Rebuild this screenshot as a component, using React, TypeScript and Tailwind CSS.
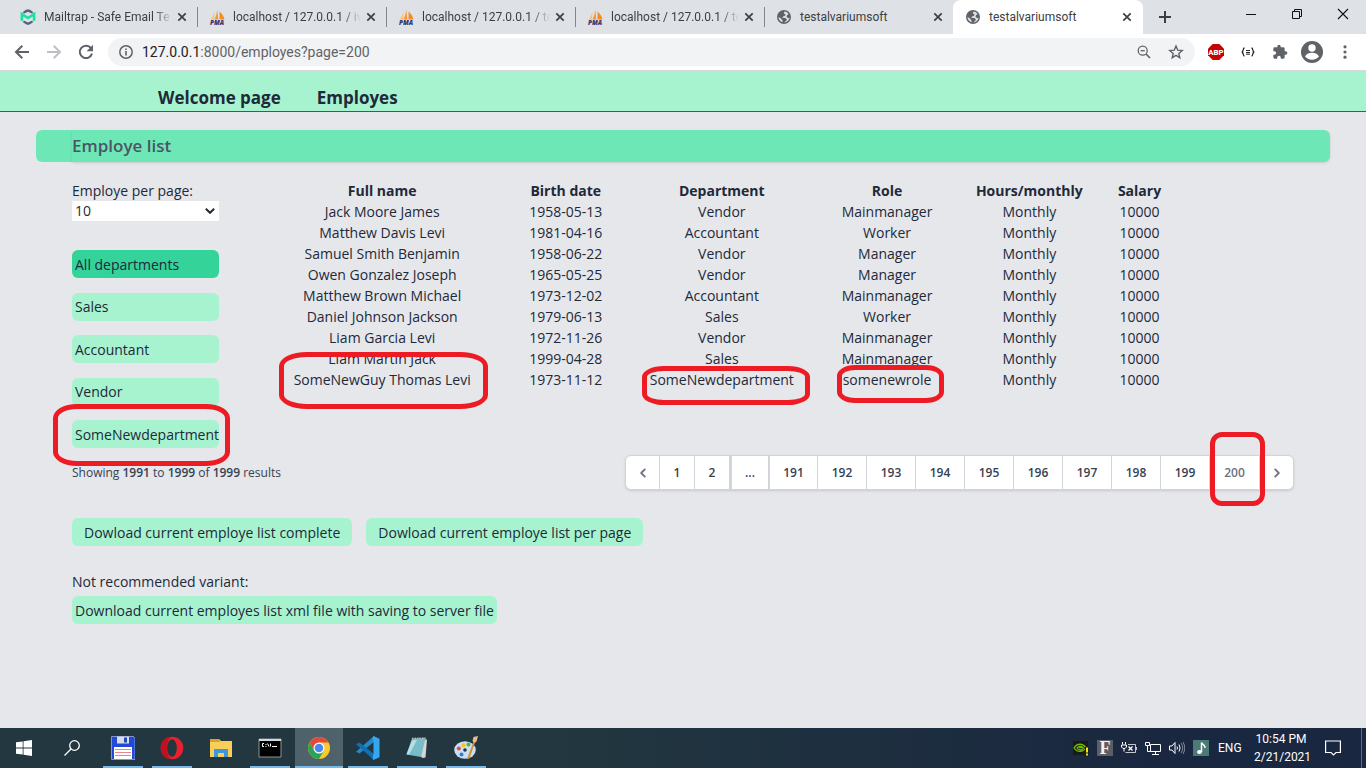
import React from "react";
import type { ReactNode } from "react";

const PAGE_FONT = "font-['Open_Sans','Noto_Sans',sans-serif]";
const SYSTEM_FONT = "font-['Roboto','Noto_Sans',sans-serif]";

/* ---------- Browser icons ---------- */

function MailtrapIcon() {
  return (
    <svg viewBox="0 0 16 16" className="size-4 shrink-0" aria-hidden="true">
      <path d="M2.500 3.400 5.500 1 8 .2l2.500.8 3 2.400-1.700 1L8 2.700 4.200 4.400z" fill="#56617a" />
      <path d="M2.500 12.800 5.500 15 8 15.900l2.500-.9 3-2.200-1.700-1.100L8 13.400l-3.800-1.700z" fill="#56617a" />
      <path d="M1.900 11.700V5.200L8 9l6.100-3.800v6.500" fill="none" stroke="#17e3a1" strokeWidth="2.600" />
    </svg>
  );
}

function PmaIcon() {
  return (
    <svg viewBox="0 0 16 16" className="size-4 shrink-0 overflow-visible" aria-hidden="true">
      <path d="M5.600 1.500 5 10.500H1.500C3.500 8.500 5 5 5.600 1.500z" fill="#fbc078" />
      <path d="M8.200.3 9.300 10.500H5.400C7 7.800 8 4 8.200.3z" fill="#f9962e" />
      <path d="M10.600 2.500c2.500 2 4.300 5 4.900 8h-5z" fill="#f68b1f" />
      <text x="8" y="15.500" textAnchor="middle" fontSize="6.400" fontWeight="800" fontStyle="italic" fill="#35356f" fontFamily="Open Sans, sans-serif">
        PMA
      </text>
    </svg>
  );
}

function GlobeIcon() {
  return (
    <svg viewBox="0 0 16 16" className="size-4 shrink-0" aria-hidden="true">
      <circle cx="8" cy="8" r="7" fill="#5f6368" />
      <path d="M8.500 2.600 7.800 4.500l1.700.8-.4 1.400-2 .7-.9 1.300 3.200.3 1.500 1.200-.8 1.900-2 1.300c2.700.2 5.200-1.900 5.500-4.700l-1.400.5-1.700-1.500.6-1.600 1.500-.8c-.9-1.600-2.400-2.600-4.100-2.700z" fill="#dee1e6" />
      <path d="M2.500 8.100 5 9.400l1.400 1.800.2 2C4.200 12.700 2.500 10.500 2.500 8.100z" fill="#dee1e6" />
    </svg>
  );
}

function CloseIcon() {
  return (
    <svg viewBox="0 0 10 10" className="size-[10px]" aria-hidden="true">
      <path d="m1.300 1.300 7.400 7.400m0-7.400L1.300 8.700" stroke="#3c4043" strokeWidth="1.700" />
    </svg>
  );
}

type Tab = { title: string; icon: ReactNode; active?: boolean; divider?: boolean };

const tabs: Tab[] = [
  { title: "Mailtrap - Safe Email Te", icon: <MailtrapIcon />, divider: true },
  { title: "localhost / 127.0.0.1 / iv", icon: <PmaIcon />, divider: true },
  { title: "localhost / 127.0.0.1 / te", icon: <PmaIcon />, divider: true },
  { title: "localhost / 127.0.0.1 / te", icon: <PmaIcon />, divider: true },
  { title: "testalvariumsoft", icon: <GlobeIcon /> },
  { title: "testalvariumsoft", icon: <GlobeIcon />, active: true },
];

function tabClass(tab: Tab) {
  if (tab.active) return "w-[190px] rounded-t-lg bg-white pl-3";
  return tab.divider ? "w-[189px] pl-[11px]" : "w-[188px] pl-[11px]";
}

function TabStrip() {
  return (
    <div className="flex h-[34px] items-stretch bg-[#dee1e6] pl-[9px]">
      {tabs.map((tab, i) => (
        <div key={i} className={"flex items-center " + tabClass(tab)}>
          {tab.icon}
          <span
            className={
              "ml-2 w-[128px] text-xs whitespace-nowrap text-[#3c4043] " +
              (tab.divider ? "mask-r-from-86%" : "")
            }
          >
            {tab.title}
          </span>
          <button aria-label={"Close " + tab.title} className="ml-[5px]">
            <CloseIcon />
          </button>
          {tab.divider && <span className="ml-auto h-5 w-px bg-[#80868b]" />}
        </div>
      ))}
      <button aria-label="New tab" className="ml-[15px]">
        <svg viewBox="0 0 14 14" className="size-[14px]" aria-hidden="true">
          <path d="M7 1v12M1 7h12" stroke="#3c4043" strokeWidth="2" />
        </svg>
      </button>
      <div className="ml-auto flex items-center gap-[34px] pr-[17px] pb-[6px]">
        <button aria-label="Minimize">
          <svg viewBox="0 0 12 12" className="size-3" aria-hidden="true">
            <path d="M1 6.500h10" stroke="#111" />
          </svg>
        </button>
        <button aria-label="Restore">
          <svg viewBox="0 0 12 12" className="size-3" fill="none" stroke="#111" aria-hidden="true">
            <path d="M1.500 3.500h7v7h-7zM3.500 3.500v-2h7v7h-2" />
          </svg>
        </button>
        <button aria-label="Close window">
          <svg viewBox="0 0 12 12" className="size-3" aria-hidden="true">
            <path d="m1 1 10 10M11 1 1 11" stroke="#111" strokeWidth="1.100" />
          </svg>
        </button>
      </div>
    </div>
  );
}

function Toolbar() {
  return (
    <div className="flex h-9 items-center bg-white pr-[13px] pl-[14px]">
      <button aria-label="Back">
        <svg viewBox="0 0 16 16" className="size-4" fill="none" stroke="#5f6368" strokeWidth="2" aria-hidden="true">
          <path d="M15 8H2.500M8.300 1.700 2 8l6.300 6.300" />
        </svg>
      </button>
      <button aria-label="Forward" className="ml-4">
        <svg viewBox="0 0 16 16" className="size-4" fill="none" stroke="#bdc1c6" strokeWidth="2" aria-hidden="true">
          <path d="M1 8h12.500M7.700 1.700 14 8l-6.300 6.300" />
        </svg>
      </button>
      <button aria-label="Reload" className="ml-4">
        <svg viewBox="0 0 16 16" className="size-4" aria-hidden="true">
          <path d="M13 4.200A6.200 6.200 0 1 0 14 9.500" fill="none" stroke="#5f6368" strokeWidth="2" />
          <path d="M15 .8v6.400H8.600z" fill="#5f6368" />
        </svg>
      </button>
      <div className="ml-[14px] flex h-7 flex-1 items-center rounded-full bg-[#f1f3f4] pr-[11px] pl-[11px]">
        <svg viewBox="0 0 14 14" className="size-[14px] shrink-0" aria-hidden="true">
          <circle cx="7" cy="7" r="6.200" fill="none" stroke="#5f6368" strokeWidth="1.500" />
          <path d="M7 6v4.500M7 3.400v1.600" stroke="#5f6368" strokeWidth="1.600" />
        </svg>
        <div className="ml-[9px] flex-1 text-sm text-[#5f6368]">
          <span className="text-[#202124]">127.0.0.1</span>:8000/employes?page=200
        </div>
        <button aria-label="Zoom">
          <svg viewBox="0 0 14 14" className="size-[14px]" fill="none" stroke="#5f6368" strokeWidth="1.300" aria-hidden="true">
            <circle cx="5.700" cy="5.700" r="4.500" />
            <path d="M3.600 5.700h4.200" />
            <path d="m9 9 4 4" strokeWidth="1.700" />
          </svg>
        </button>
        <button aria-label="Bookmark this page" className="ml-[17px]">
          <svg viewBox="0 0 16 16" className="size-4" fill="none" stroke="#5f6368" strokeWidth="1.400" aria-hidden="true">
            <path d="m8 2 1.700 4.100 4.500.4-3.400 2.900 1 4.300L8 11.400l-3.800 2.300 1-4.300L1.800 6.500l4.500-.4z" />
          </svg>
        </button>
      </div>
      <button aria-label="Adblock Plus" className="ml-3">
        <svg viewBox="0 0 18 18" className="size-[18px]" aria-hidden="true">
          <path d="M5.700 1h6.600L17 5.700v6.600L12.300 17H5.700L1 12.300V5.700z" fill="#c70000" />
          <text x="9" y="11.900" textAnchor="middle" fontSize="7.800" fontWeight="800" fill="#fff" fontFamily="Roboto, sans-serif">ABP</text>
        </svg>
      </button>
      <button aria-label="JSON viewer" className="ml-4">
        <svg viewBox="0 0 14 10" className="h-[10px] w-[14px]" fill="none" stroke="#202124" strokeWidth="1.300" aria-hidden="true">
          <path d="M3.500 1C1.500 1 3 4.500.8 5 3 5.500 1.500 9 3.500 9M10.500 1c2 0 .5 3.500 2.700 4-2.200.5-.7 4-2.700 4" />
          <path d="M5 3.500h4M5 5.500h4M5 7.200h4" strokeWidth="1" />
        </svg>
      </button>
      <button aria-label="Extensions" className="ml-[17px]">
        <svg viewBox="0 0 24 24" className="size-4" fill="#5f6368" aria-hidden="true">
          <path d="M20.500 11H19V7a2 2 0 0 0-2-2h-4V3.500a2.500 2.500 0 0 0-5 0V5H4a2 2 0 0 0-2 2v3.800h1.500a2.700 2.700 0 0 1 0 5.400H2V20a2 2 0 0 0 2 2h3.800v-1.500a2.700 2.700 0 0 1 5.400 0V22H17a2 2 0 0 0 2-2v-4h1.500a2.500 2.500 0 0 0 0-5z" />
        </svg>
      </button>
      <button aria-label="Profile" className="ml-3">
        <svg viewBox="0 0 24 24" className="size-6" aria-hidden="true">
          <circle cx="12" cy="12" r="11" fill="#5f6368" />
          <circle cx="12" cy="8" r="3.700" fill="#fff" />
          <path d="M5 16.200c1.500-2.300 4-3.400 7-3.400s5.500 1.100 7 3.400c-1.500 2.100-4 3.500-7 3.500s-5.500-1.400-7-3.500z" fill="#fff" />
        </svg>
      </button>
      <button aria-label="Menu" className="ml-[13px]">
        <svg viewBox="0 0 16 16" className="size-4" fill="#5f6368" aria-hidden="true">
          <circle cx="8" cy="2.800" r="1.600" />
          <circle cx="8" cy="8" r="1.600" />
          <circle cx="8" cy="13.200" r="1.600" />
        </svg>
      </button>
    </div>
  );
}

/* ---------- Page ---------- */

function Mark({ className }: { className: string }) {
  return (
    <span
      aria-hidden="true"
      className={"pointer-events-none absolute z-10 border-[5px] border-[#ed1c24] " + className}
    />
  );
}

const departments = ["All departments", "Sales", "Accountant", "Vendor", "SomeNewdepartment"];

const columns = ["Full name", "Birth date", "Department", "Role", "Hours/monthly", "Salary"];

const employes = [
  ["Jack Moore James", "1958-05-13", "Vendor", "Mainmanager", "Monthly", "10000"],
  ["Matthew Davis Levi", "1981-04-16", "Accountant", "Worker", "Monthly", "10000"],
  ["Samuel Smith Benjamin", "1958-06-22", "Vendor", "Manager", "Monthly", "10000"],
  ["Owen Gonzalez Joseph", "1965-05-25", "Vendor", "Manager", "Monthly", "10000"],
  ["Matthew Brown Michael", "1973-12-02", "Accountant", "Mainmanager", "Monthly", "10000"],
  ["Daniel Johnson Jackson", "1979-06-13", "Sales", "Worker", "Monthly", "10000"],
  ["Liam Garcia Levi", "1972-11-26", "Vendor", "Mainmanager", "Monthly", "10000"],
  ["Liam Martin Jack", "1999-04-28", "Sales", "Mainmanager", "Monthly", "10000"],
  ["SomeNewGuy Thomas Levi", "1973-11-12", "SomeNewdepartment", "somenewrole", "Monthly", "10000"],
];

const marks: Record<string, string> = {
  "SomeNewGuy Thomas Levi": "-top-[17px] left-[7px] h-[57px] w-[209px] rounded-[28px/14px]",
  SomeNewdepartment: "-top-[3px] left-[3px] h-[39px] w-[168px] rounded-[22px/11px]",
  somenewrole: "-top-1 left-[33px] h-[38px] w-[107px] rounded-[18px/11px]",
};

const pages = ["1", "2", "...", "191", "192", "193", "194", "195", "196", "197", "198", "199", "200"];

function pageClass(p: string) {
  if (p === "...") return "w-10 border-x-2";
  if (p.length === 1) return "w-[35px] border-r";
  if (p === "191") return "w-[48px] border-r";
  return "w-[49px] border-r";
}

function Chevron({ dir }: { dir: "left" | "right" }) {
  return (
    <svg viewBox="0 0 20 20" className="size-[18px]" fill="#6b7280" aria-hidden="true">
      {dir === "left" ? (
        <path fillRule="evenodd" d="M12.707 5.293a1 1 0 010 1.414L9.414 10l3.293 3.293a1 1 0 01-1.414 1.414l-4-4a1 1 0 010-1.414l4-4a1 1 0 011.414 0z" />
      ) : (
        <path fillRule="evenodd" d="M7.293 14.707a1 1 0 010-1.414L10.586 10 7.293 6.707a1 1 0 011.414-1.414l4 4a1 1 0 010 1.414l-4 4a1 1 0 01-1.414 0z" />
      )}
    </svg>
  );
}

function Page() {
  return (
    <main className={"flex-1 border-t border-[#d5d8dc] bg-gray-200 text-sm leading-[21px] text-gray-800 " + PAGE_FONT}>
      <nav className="flex h-[41px] items-end gap-9 border-b border-[#4b5563] bg-[#a7f3d0] pl-[158px] text-[17px] leading-[26px] font-bold">
        <a href="#welcome">Welcome page</a>
        <a href="#employes">Employes</a>
      </nav>

      <div className="mx-9 mt-[18px] rounded-md bg-[#6ee7b7] pl-9">
        <h1 className="rounded-r-md text-[17px] leading-8 font-semibold text-gray-600 shadow-sm">
          Employe list
        </h1>
      </div>

      <div className="px-[72px] pt-[18px]">
        <div className="flex">
          <aside className="w-[147px] shrink-0">
            <label htmlFor="per-page" className="block">
              Employe per page:
            </label>
            <div className="relative">
              <select id="per-page" defaultValue="10" className="block h-5 w-full appearance-none bg-white pl-[3px] leading-5">
                <option>10</option>
                <option>20</option>
                <option>50</option>
              </select>
              <svg viewBox="0 0 10 6" className="pointer-events-none absolute top-[7px] right-1 h-[6px] w-[10px]" fill="none" stroke="#1f2937" strokeWidth="2" aria-hidden="true">
                <path d="m.8.800 4.200 4 4.200-4" />
              </svg>
            </div>
            <ul className="mt-[29px] flex h-[198px] flex-col justify-between">
              {departments.map((d, i) => (
                <li key={d} className="relative">
                  <button
                    className={
                      "block h-7 w-full rounded-md pl-[3px] text-left whitespace-nowrap " +
                      (i === 0 ? "bg-[#34d399]" : "bg-[#a7f3d0]")
                    }
                  >
                    {d}
                  </button>
                  {d === "SomeNewdepartment" && (
                    <Mark className="-top-4 -left-[19px] h-[62px] w-[177px] rounded-[24px/14px]" />
                  )}
                </li>
              ))}
            </ul>
          </aside>

          <div className="mr-[104px] ml-[53px] flex-1">
            <table className="w-full table-fixed text-center">
              <colgroup>
                <col className="w-[24%]" />
                <col className="w-[16%]" />
                <col className="w-[18%]" />
                <col className="w-[18%]" />
                <col className="w-[13%]" />
                <col className="w-[11%]" />
              </colgroup>
              <thead>
                <tr>
                  {columns.map((c) => (
                    <th key={c} className="p-0 font-bold whitespace-nowrap">
                      {c}
                    </th>
                  ))}
                </tr>
              </thead>
              <tbody>
                {employes.map((row) => (
                  <tr key={row[0]}>
                    {row.map((cell, i) => (
                      <td key={i} className="relative p-0 whitespace-nowrap">
                        {cell}
                        {marks[cell] && <Mark className={marks[cell]} />}
                      </td>
                    ))}
                  </tr>
                ))}
              </tbody>
            </table>
          </div>
        </div>

        <div className="mt-[7px] flex items-center justify-between">
          <p className="text-xs text-gray-700">
            Showing <span className="font-semibold">1991</span> to <span className="font-semibold">1999</span> of{" "}
            <span className="font-semibold">1999</span> results
          </p>
          <nav aria-label="Pagination" className="flex h-[35px] items-stretch rounded-md border border-gray-300 bg-white text-xs font-semibold text-gray-700 shadow-sm">
            <a href="#previous" aria-label="Previous" className="flex w-[34px] items-center justify-center border-r border-gray-300">
              <Chevron dir="left" />
            </a>
            {pages.map((p) =>
              p === "200" ? (
                <span key={p} aria-current="page" className="relative flex w-[50px] items-center justify-center border-r border-gray-300 text-gray-500">
                  {p}
                  <Mark className="-top-6 left-0 h-[74px] w-[55px] rounded-[12px]" />
                </span>
              ) : (
                <a key={p} href={"#page-" + p} className={"flex items-center justify-center border-gray-300 " + pageClass(p)}>
                  {p}
                </a>
              )
            )}
            <a href="#next" aria-label="Next" className="flex w-[33px] items-center justify-center">
              <Chevron dir="right" />
            </a>
          </nav>
        </div>

        <div className="mt-7 flex gap-[14px]">
          <button className="h-7 rounded-md bg-[#a7f3d0] px-3">Dowload current employe list complete</button>
          <button className="h-7 rounded-md bg-[#a7f3d0] px-3">Dowload current employe list per page</button>
        </div>

        <p className="mt-[25px]">Not recommended variant:</p>
        <button className="mt-1 h-7 rounded-md bg-[#a7f3d0] px-[3px]">
          Download current employes list xml file with saving to server file
        </button>
      </div>
    </main>
  );
}

/* ---------- Taskbar ---------- */

const apps: { name: string; running: boolean; active?: boolean; icon: ReactNode }[] = [
  {
    name: "Total Commander",
    running: true,
    icon: (
      <>
        <path d="M.5.500h22l1.500 2V23.500H.500z" fill="#2349d8" stroke="#7e98d4" />
        <path d="M6 .5h12v7H6z" fill="#d8dce6" />
        <path d="M13 1.500h3v5h-3z" fill="#2349b8" />
        <path d="M3 11h18v12H3z" fill="#fff" />
        <path d="M4 13.500h16M4 16.500h16M4 19.500h16" stroke="#e8858d" strokeWidth="1.200" />
      </>
    ),
  },
  {
    name: "Opera",
    running: true,
    icon: (
      <>
        <ellipse cx="12" cy="12" rx="11.300" ry="11.300" fill="#e8202f" />
        <path d="M12 .7a11.300 11.300 0 0 0 0 22.600c-3-1-5-5.500-5-11.300S9 1.700 12 .7z" fill="#c3101f" />
        <ellipse cx="12" cy="12" rx="4.800" ry="8.800" fill="#223740" />
      </>
    ),
  },
  {
    name: "File Explorer",
    running: false,
    icon: (
      <>
        <path d="M1 3h9l2 2h11v16H1z" fill="#f9cf5a" />
        <path d="M1 3h9l1 3H1z" fill="#dda21f" />
        <path d="M5 13h14v8h-4v-4H9v4H5z" fill="#3e96dd" />
      </>
    ),
  },
  {
    name: "Command Prompt",
    running: true,
    icon: (
      <>
        <path d="M1 3h22v18H1z" fill="#000" stroke="#8c969b" />
        <path d="M1 3h22v2H1z" fill="#d5dade" />
        <path d="M6 7.500H4.500v3H6M8 8v1m0 1v1M9.500 7.500l1.500 3M12.500 7.500v3M14 10.500h5" stroke="#fff" fill="none" />
      </>
    ),
  },
  {
    name: "Google Chrome",
    running: true,
    active: true,
    icon: (
      <>
        <circle cx="12" cy="12" r="11" fill="#fbc92f" />
        <path d="M2.500 6.500A11 11 0 0 1 21.500 6.500H12L7.200 14.700z" fill="#df4a3c" />
        <path d="M2.500 6.500a11 11 0 0 0 9.500 16.500l4.800-8.200H7.200z" fill="#28a35a" />
        <circle cx="12" cy="12" r="5.500" fill="#fff" />
        <circle cx="12" cy="12" r="4.300" fill="#4a88ee" />
      </>
    ),
  },
  {
    name: "Visual Studio Code",
    running: true,
    icon: (
      <>
        <path d="M18 0v6L3.500 17.500 0 15.700z" fill="#2489ca" />
        <path d="M0 8.300 3.500 6.500 18 18v6z" fill="#1070b3" />
        <path d="m17.500 0 6 2.800v18.400l-6 2.800-1-1.500 1-5V6.500l-1-5z" fill="#35a7f0" />
      </>
    ),
  },
  {
    name: "Notepad",
    running: true,
    icon: (
      <>
        <path d="m7 3 15 .5-1.500 18L17 22z" fill="#d5d8cf" />
        <path d="M7 2.500 20.500 2 16 21 1.500 18.500z" fill="#78bcc7" />
        <path d="M7 4.500 12 4 4 18.500l-2.500-.3z" fill="#b8e0e4" />
        <path d="M7 2.500 20.500 2" stroke="#b5bbbd" strokeWidth="1.500" strokeDasharray="1.500 1" />
      </>
    ),
  },
  {
    name: "Paint",
    running: true,
    icon: (
      <>
        <ellipse cx="11" cy="14" rx="10.800" ry="8.800" fill="#c8e0f2" />
        <circle cx="11" cy="14" r="1.800" fill="#223740" />
        <circle cx="4.800" cy="12.500" r="2" fill="#df4c48" />
        <circle cx="9.500" cy="9.300" r="2" fill="#f3c51e" />
        <circle cx="14.500" cy="8.500" r="2" fill="#59ad46" />
        <circle cx="7.500" cy="18.500" r="2" fill="#3e7ad0" />
        <path d="m19.500 5.500 1.500 1-5.500 16-2.500.8z" fill="#dd8a35" />
        <path d="m18.500 5 1-4L24 0l-1.500 5.500-2 1.500z" fill="#e6bc87" />
      </>
    ),
  },
];

function Tray() {
  return (
    <div className="ml-auto flex items-center gap-2 pr-[4px] text-xs text-white">
      <svg viewBox="0 0 16 16" className="size-4" aria-hidden="true">
        <path d="M0 1h15v14H0z" fill="#151d19" />
        <path d="M1 8c3-5 9-5 12 0-3 4.500-9 4.500-12 0zm3 0c1.500 2.500 5 2.500 6.500 0C9 5.800 5.500 5.800 4 8zm2 0c1-1 2-1 3 0" fill="none" stroke="#76b900" strokeWidth="1.300" />
        <path d="M12 7h3.500v9H12z" fill="#151d19" />
        <path d="M13 7.500h2v5h-2zM13 13.500h2v2h-2z" fill="#ffe11a" />
      </svg>
      <svg viewBox="0 0 16 16" className="size-4" aria-hidden="true">
        <path d="M0 0h16v16H0z" fill="#5b5f63" />
        <text x="8" y="14" textAnchor="middle" fontSize="18" fontWeight="700" fill="#f2f2f2" fontFamily="Liberation Serif, serif">F</text>
      </svg>
      <svg viewBox="0 0 16 16" className="size-4" fill="none" stroke="#fff" aria-hidden="true">
        <path d="M1.500 2v2.500M4.500 2v2.500M.500 5h5v2L4 8.500H2L.500 7zM3 8.500v3" />
        <path d="M7 4.500h7.500v8H4.500M15.500 7v3" opacity=".75" />
        <path d="m7.500 6.500 4 4m0-4-4 4" strokeWidth="1.300" />
      </svg>
      <svg viewBox="0 0 16 16" className="size-4" fill="none" stroke="#fff" aria-hidden="true">
        <path d="M5.500 4.500h10v7h-10zM10.500 11.500v3M7 14.500h7M.500 2.500h4v3h-4zM2.500 5.500v6h3" />
      </svg>
      <svg viewBox="0 0 16 16" className="size-4" fill="none" stroke="#fff" aria-hidden="true">
        <path d="M.500 6h2.500l3-3.500v11L3 10H.500zM8 6.500q1 1.500 0 3M10 4.500q2.200 3.500 0 7" />
        <path d="M12 3q3.500 5 0 10M14 2q3.500 6 0 12" opacity=".45" />
      </svg>
      <svg viewBox="0 0 16 16" className="size-4" aria-hidden="true">
        <path d="M0 0h16v16H0z" fill="#4c7a74" />
        <path d="M8.500 12V2.500c1 2.500 4 2.500 3.500 5.500" fill="none" stroke="#fff" strokeWidth="1.500" />
        <ellipse cx="6.500" cy="12" rx="2.500" ry="2" fill="#fff" />
      </svg>
      <span className="ml-px w-6">ENG</span>
      <div className="ml-1 w-[54px] text-center leading-[18px] whitespace-nowrap">
        <div>10:54 PM</div>
        <div>2/21/2021</div>
      </div>
      <button aria-label="Notifications" className="ml-[9px]">
        <svg viewBox="0 0 16 16" className="size-4" fill="none" stroke="#fff" strokeWidth="1.200" aria-hidden="true">
          <path d="M.600 1h14.800v11.500h-4.400l-2.500 2.500L6 12.500H.600z" />
        </svg>
      </button>
      <span className="ml-[12px] h-10 w-px bg-[#5e6b7d]" />
    </div>
  );
}

function Taskbar() {
  return (
    <footer className="flex h-10 shrink-0 items-stretch bg-linear-to-r from-[#22373f] from-40% to-[#1a2740] to-85%">
      <button aria-label="Start" className="flex w-12 items-center justify-center">
        <svg viewBox="0 0 16 16" className="size-4" fill="#fff" aria-hidden="true">
          <path d="M0 2.300 6.700 1.400v6.200H0zM7.500 1.300 16 0v7.600H7.500zM0 8.400h6.700v6.200L0 13.700zM7.500 8.400H16V16l-8.500-1.300z" />
        </svg>
      </button>
      <button aria-label="Search" className="flex w-12 items-center justify-center">
        <svg viewBox="0 0 16 16" className="size-4" fill="none" stroke="#fff" strokeWidth="1.300" aria-hidden="true">
          <circle cx="10.500" cy="5.500" r="4.800" />
          <path d="M7 9 .500 15.500" />
        </svg>
      </button>
      <div className="ml-[3px] flex gap-px">
        {apps.map((app) => (
          <button
            key={app.name}
            aria-label={app.name}
            className={"flex w-12 flex-col items-center " + (app.active ? "bg-[#4f626a]" : "")}
          >
            <svg viewBox="0 0 24 24" className="mt-2 size-6" aria-hidden="true">
              {app.icon}
            </svg>
            {app.running && (
              <span className={"mt-auto h-[2px] bg-[#76b9ed] " + (app.active ? "w-12" : "w-10")} />
            )}
          </button>
        ))}
      </div>
      <Tray />
    </footer>
  );
}

export default function App() {
  return (
    <div className={"flex min-h-screen flex-col " + SYSTEM_FONT}>
      <TabStrip />
      <Toolbar />
      <Page />
      <Taskbar />
    </div>
  );
}
